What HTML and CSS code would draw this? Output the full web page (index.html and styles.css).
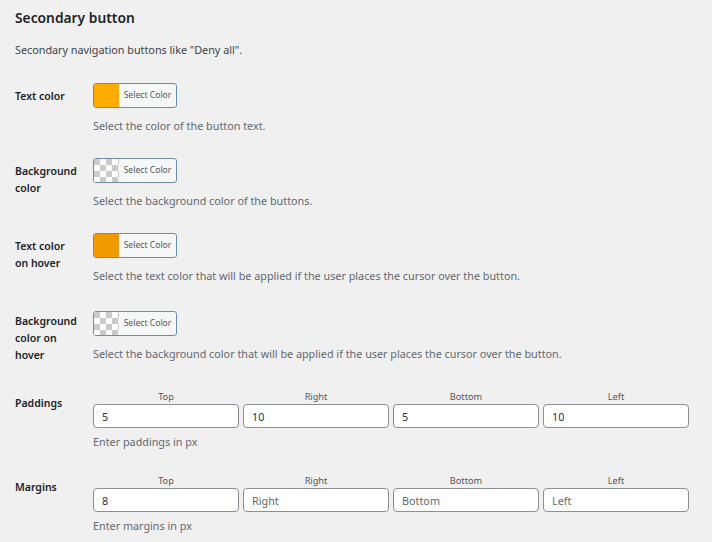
FILE: index.html
```html
<!DOCTYPE html>
<html lang="en">
<head>
    <meta charset="UTF-8">
    <meta name="viewport" content="width=device-width, initial-scale=1.0">
    <title>Secondary button</title>
    <link rel="stylesheet" href="styles.css">
</head>
<body>
    <div class="wrap">
        <h2 class="section-title">Secondary button</h2>
        <p class="section-desc">Secondary navigation buttons like "Deny all".</p>

        <div class="form-table">
            <div class="row">
                <div class="row-label">Text color</div>
                <div class="row-field">
                    <button class="color-result"><span class="swatch" style="background-color: #ffab00"></span><span class="color-text">Select Color</span></button>
                    <p class="description">Select the color of the button text.</p>
                </div>
            </div>

            <div class="row">
                <div class="row-label">Background color</div>
                <div class="row-field">
                    <button class="color-result"><span class="swatch swatch-empty"></span><span class="color-text">Select Color</span></button>
                    <p class="description">Select the background color of the buttons.</p>
                </div>
            </div>

            <div class="row">
                <div class="row-label">Text color on hover</div>
                <div class="row-field">
                    <button class="color-result"><span class="swatch" style="background-color: #f09a00"></span><span class="color-text">Select Color</span></button>
                    <p class="description">Select the text color that will be applied if the user places the cursor over the button.</p>
                </div>
            </div>

            <div class="row row-loose">
                <div class="row-label">Background color on hover</div>
                <div class="row-field">
                    <button class="color-result"><span class="swatch swatch-empty"></span><span class="color-text">Select Color</span></button>
                    <p class="description">Select the background color that will be applied if the user places the cursor over the button.</p>
                </div>
            </div>

            <div class="row">
                <div class="row-label">Paddings</div>
                <div class="row-field">
                    <div class="sides">
                        <label class="side"><span class="side-name">Top</span><input type="text" value="5" placeholder="Top"></label>
                        <label class="side"><span class="side-name">Right</span><input type="text" value="10" placeholder="Right"></label>
                        <label class="side"><span class="side-name">Bottom</span><input type="text" value="5" placeholder="Bottom"></label>
                        <label class="side"><span class="side-name">Left</span><input type="text" value="10" placeholder="Left"></label>
                    </div>
                    <p class="description description-tight">Enter paddings in px</p>
                </div>
            </div>

            <div class="row">
                <div class="row-label">Margins</div>
                <div class="row-field">
                    <div class="sides">
                        <label class="side"><span class="side-name">Top</span><input type="text" value="8" placeholder="Top"></label>
                        <label class="side"><span class="side-name">Right</span><input type="text" placeholder="Right"></label>
                        <label class="side"><span class="side-name">Bottom</span><input type="text" placeholder="Bottom"></label>
                        <label class="side"><span class="side-name">Left</span><input type="text" placeholder="Left"></label>
                    </div>
                    <p class="description description-tight">Enter margins in px</p>
                </div>
            </div>
        </div>
    </div>
</body>
</html>
```

FILE: styles.css
```css
body {
    margin: 0;
    background-color: #f0f0f1;
    color: #1d2327;
    font-family: "Noto Sans", "Open Sans", sans-serif;
    font-size: 10.8px;
}

.wrap {
    padding: 8px 15px 0;
}

.section-title {
    margin: 0;
    font-size: 13.8px;
    line-height: 20px;
    font-weight: 600;
    color: #1d2327;
}

.section-desc {
    margin: 12px 0 0;
    line-height: 20px;
    color: #3c434a;
}

.form-table {
    margin-top: 12px;
}

.row {
    display: flex;
}

.row-label {
    width: 64px;
    flex-shrink: 0;
    padding: 16px 14px 12px 0;
    font-size: 10.5px;
    font-weight: 600;
    line-height: 17px;
}

.row-field {
    padding: 11px 0 12px;
}

.row-loose .row-field {
    padding: 14px 0 16px;
}

.color-result {
    display: flex;
    align-items: stretch;
    width: 84px;
    height: 25px;
    padding: 0;
    border: 1px solid #6a8db3;
    border-radius: 3px;
    background-color: #f6f7f7;
    overflow: hidden;
    cursor: pointer;
    font-family: inherit;
}

.swatch {
    width: 25px;
    flex-shrink: 0;
}

.swatch-empty {
    background-color: #fff;
    background-image: conic-gradient(#cbcbcb 25%, #fff 25% 50%, #cbcbcb 50% 75%, #fff 75%);
    background-size: 12px 12px;
    background-position: -6px 0;
}

.color-text {
    flex: 1;
    text-align: center;
    font-size: 8.6px;
    line-height: 23px;
    color: #50575e;
}

.description {
    margin: 8px 0 0;
    line-height: 19px;
    color: #646970;
}

.description-tight {
    margin-top: 4px;
}

.sides {
    display: grid;
    grid-template-columns: repeat(4, 146px);
    gap: 4px;
}

.side {
    display: flex;
    flex-direction: column;
}

.side-name {
    text-align: center;
    font-size: 9.2px;
    line-height: 14px;
    color: #50575e;
}

.side input {
    box-sizing: border-box;
    height: 24px;
    margin: 0;
    padding: 0 8px;
    border: 1px solid #8c8f94;
    border-radius: 4px;
    background-color: #fff;
    font-family: inherit;
    font-size: 10.8px;
    color: #2c3338;
}

.side input::placeholder {
    color: #646970;
}
```
